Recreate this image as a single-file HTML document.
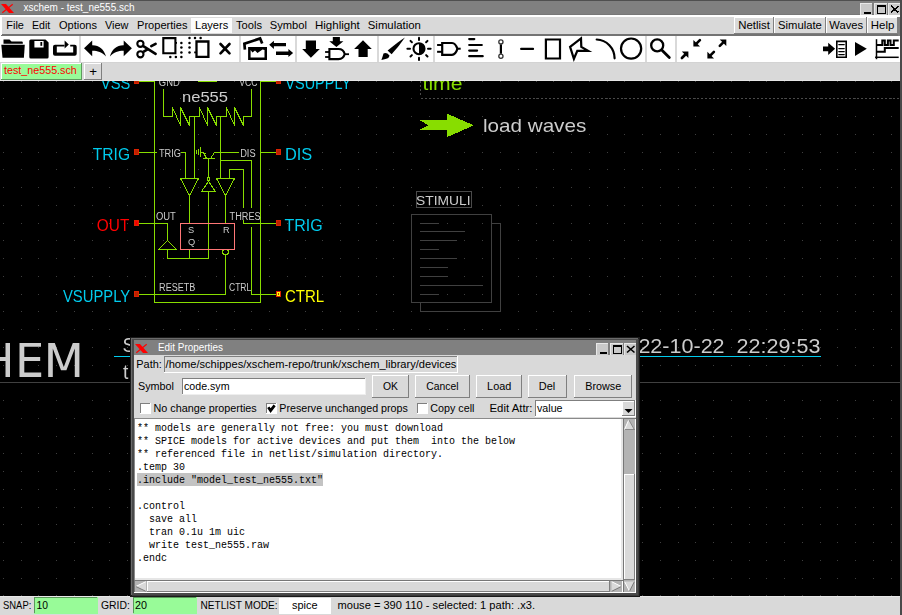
<!DOCTYPE html>
<html><head><meta charset="utf-8"><style>html,body{margin:0;padding:0;background:#d9d9d9;overflow:hidden}svg{display:block}text{white-space:pre}</style></head>
<body><svg width="902" height="615" viewBox="0 0 902 615" shape-rendering="crispEdges" font-family="Liberation Sans">
<rect x="0" y="0" width="902" height="615" fill="#d9d9d9" />
<rect x="0" y="0" width="902" height="1" fill="#4f4f4f" />
<rect x="0" y="1" width="902" height="13" fill="#808080" />
<rect x="0" y="14" width="902" height="1" fill="#777777" />
<path d="M1,4 L6,4 L14,13 L9,13 Z" fill="#ff0000" stroke="none" stroke-width="1" shape-rendering="geometricPrecision"/>
<line x1="2.3" y1="12.7" x2="12.7" y2="4.3" stroke="#ff0000" stroke-width="1.1" shape-rendering="geometricPrecision"/>
<text x="23.5" y="10.5" font-family="Liberation Sans" font-size="11" fill="#ffffff" textLength="111" lengthAdjust="spacingAndGlyphs" >xschem - test_ne555.sch</text>
<rect x="860" y="3" width="12" height="12" fill="#c9c9c9" />
<rect x="860" y="3" width="12" height="1" fill="#e8e8e8" />
<rect x="860" y="3" width="1" height="12" fill="#e8e8e8" />
<rect x="874" y="3" width="13" height="12" fill="#c9c9c9" />
<rect x="874" y="3" width="13" height="1" fill="#e8e8e8" />
<rect x="874" y="3" width="1" height="12" fill="#e8e8e8" />
<rect x="888" y="3" width="12" height="12" fill="#c9c9c9" />
<rect x="888" y="3" width="12" height="1" fill="#e8e8e8" />
<rect x="888" y="3" width="1" height="12" fill="#e8e8e8" />
<rect x="864" y="12" width="7" height="2" fill="#000000" />
<path d="M877.5,6.5 h8 v7 h-8 z" fill="none" stroke="#000" stroke-width="1.4" />
<rect x="877" y="5" width="9" height="2.4" fill="#000" />
<line x1="891" y1="6" x2="898.5" y2="12.5" stroke="#000" stroke-width="1.6" />
<line x1="898.5" y1="6" x2="891" y2="12.5" stroke="#000" stroke-width="1.6" />
<rect x="0" y="15" width="900" height="21" fill="#ffffff" />
<rect x="2" y="34" width="898" height="2" fill="#737373" />
<rect x="1" y="35" width="1" height="1" fill="#737373" />
<rect x="898" y="17" width="2" height="19" fill="#808080" />
<rect x="2" y="17" width="896" height="17" fill="#d9d9d9" />
<rect x="191" y="18" width="41" height="15" fill="#fcfcfc" />
<text x="6.3" y="29" font-family="Liberation Sans" font-size="11" fill="#000000" textLength="17.6" lengthAdjust="spacingAndGlyphs" >File</text>
<text x="32.0" y="29" font-family="Liberation Sans" font-size="11" fill="#000000" textLength="18.2" lengthAdjust="spacingAndGlyphs" >Edit</text>
<text x="59.0" y="29" font-family="Liberation Sans" font-size="11" fill="#000000" textLength="38.0" lengthAdjust="spacingAndGlyphs" >Options</text>
<text x="105.0" y="29" font-family="Liberation Sans" font-size="11" fill="#000000" textLength="23.5" lengthAdjust="spacingAndGlyphs" >View</text>
<text x="137.0" y="29" font-family="Liberation Sans" font-size="11" fill="#000000" textLength="50.5" lengthAdjust="spacingAndGlyphs" >Properties</text>
<text x="195.0" y="29" font-family="Liberation Sans" font-size="11" fill="#000000" textLength="33.2" lengthAdjust="spacingAndGlyphs" >Layers</text>
<text x="236.0" y="29" font-family="Liberation Sans" font-size="11" fill="#000000" textLength="26.0" lengthAdjust="spacingAndGlyphs" >Tools</text>
<text x="269.8" y="29" font-family="Liberation Sans" font-size="11" fill="#000000" textLength="37.2" lengthAdjust="spacingAndGlyphs" >Symbol</text>
<text x="315.0" y="29" font-family="Liberation Sans" font-size="11" fill="#000000" textLength="44.8" lengthAdjust="spacingAndGlyphs" >Highlight</text>
<text x="367.8" y="29" font-family="Liberation Sans" font-size="11" fill="#000000" textLength="53.0" lengthAdjust="spacingAndGlyphs" >Simulation</text>
<rect x="734" y="17" width="40" height="17" fill="#808080" />
<rect x="734" y="17" width="39" height="16" fill="#ffffff" />
<rect x="735" y="18" width="38" height="15" fill="#d9d9d9" />
<text x="738.3" y="29" font-family="Liberation Sans" font-size="11" fill="#000000" textLength="31.6" lengthAdjust="spacingAndGlyphs" >Netlist</text>
<rect x="774" y="17" width="52" height="17" fill="#808080" />
<rect x="774" y="17" width="51" height="16" fill="#ffffff" />
<rect x="775" y="18" width="50" height="15" fill="#d9d9d9" />
<text x="778" y="29" font-family="Liberation Sans" font-size="11" fill="#000000" textLength="43.8" lengthAdjust="spacingAndGlyphs" >Simulate</text>
<rect x="826" y="17" width="41" height="17" fill="#808080" />
<rect x="826" y="17" width="40" height="16" fill="#ffffff" />
<rect x="827" y="18" width="39" height="15" fill="#d9d9d9" />
<text x="829.3" y="29" font-family="Liberation Sans" font-size="11" fill="#000000" textLength="33.8" lengthAdjust="spacingAndGlyphs" >Waves</text>
<rect x="867" y="17" width="31" height="17" fill="#808080" />
<rect x="867" y="17" width="30" height="16" fill="#ffffff" />
<rect x="868" y="18" width="29" height="15" fill="#dedede" />
<text x="870.8" y="29" font-family="Liberation Sans" font-size="11" fill="#000000" textLength="23.5" lengthAdjust="spacingAndGlyphs" >Help</text>
<rect x="900" y="0" width="2" height="615" fill="#4a4a4a" />
<rect x="0" y="36" width="900" height="26" fill="#ffffff" />
<rect x="0" y="62" width="900" height="1" fill="#d3d3d3" />
<rect x="79" y="36" width="2" height="26" fill="#d9d9d9" />
<rect x="239" y="36" width="2" height="26" fill="#d9d9d9" />
<rect x="295" y="36" width="2" height="26" fill="#d9d9d9" />
<rect x="377" y="36" width="2" height="26" fill="#d9d9d9" />
<rect x="433" y="36" width="2" height="26" fill="#d9d9d9" />
<rect x="645" y="36" width="2" height="26" fill="#d9d9d9" />
<rect x="675" y="36" width="2" height="26" fill="#d9d9d9" />
<rect x="0" y="63" width="900" height="17" fill="#d9d9d9" />
<rect x="0" y="80" width="900" height="1" fill="#e6e6e6" />
<rect x="1" y="63" width="81" height="17" fill="#5e9a5e" />
<rect x="1" y="63" width="80" height="16" fill="#ffffff" />
<rect x="2" y="64" width="79" height="15" fill="#98fb98" />
<text x="4" y="74" font-family="Liberation Sans" font-size="11" fill="#ff0000" textLength="72.8" lengthAdjust="spacingAndGlyphs" >test_ne555.sch</text>
<rect x="84" y="63" width="18" height="17" fill="#7f7f7f" />
<rect x="84" y="63" width="17" height="16" fill="#ffffff" />
<rect x="85" y="64" width="16" height="15" fill="#d9d9d9" />
<text x="89.2" y="75.5" font-family="Liberation Sans" font-size="12.5" fill="#000000" textLength="7.8" lengthAdjust="spacingAndGlyphs" >+</text>
<rect x="0" y="81" width="900" height="515" fill="#000000" />
<rect x="0" y="596" width="900" height="19" fill="#d9d9d9" />
<rect x="0" y="596" width="900" height="1" fill="#e8e8e8" />
<text x="3" y="609" font-family="Liberation Sans" font-size="11" fill="#000" textLength="28.3" lengthAdjust="spacingAndGlyphs" >SNAP:</text>
<rect x="34" y="597" width="64" height="17" fill="#98fb98" />
<rect x="34" y="597" width="63" height="16" fill="#5a9a5a" />
<rect x="35" y="598" width="62" height="15" fill="#98fb98" />
<text x="36.5" y="609" font-family="Liberation Sans" font-size="11" fill="#000" textLength="11.5" lengthAdjust="spacingAndGlyphs" >10</text>
<text x="101" y="609" font-family="Liberation Sans" font-size="11" fill="#000" textLength="28.8" lengthAdjust="spacingAndGlyphs" >GRID:</text>
<rect x="133" y="597" width="64" height="17" fill="#98fb98" />
<rect x="133" y="597" width="63" height="16" fill="#5a9a5a" />
<rect x="134" y="598" width="62" height="15" fill="#98fb98" />
<text x="135" y="609" font-family="Liberation Sans" font-size="11" fill="#000" textLength="12" lengthAdjust="spacingAndGlyphs" >20</text>
<text x="200.5" y="609" font-family="Liberation Sans" font-size="11" fill="#000" textLength="77" lengthAdjust="spacingAndGlyphs" >NETLIST MODE:</text>
<rect x="279" y="598" width="52" height="16" fill="#ffffff" />
<text x="292" y="609" font-family="Liberation Sans" font-size="11" fill="#000" textLength="25.5" lengthAdjust="spacingAndGlyphs" >spice</text>
<text x="337.5" y="609" font-family="Liberation Sans" font-size="11" fill="#000" textLength="197.5" lengthAdjust="spacingAndGlyphs" >mouse = 390 110 - selected: 1 path: .x3.</text>
<defs><filter id="gray" filterUnits="userSpaceOnUse" x="0" y="0" width="902" height="615"><feColorMatrix type="identity"/></filter></defs>
<svg x="0" y="81" width="900" height="515" viewBox="0 81 900 515" overflow="hidden"><g filter="url(#gray)">
<path d="M3,81h1v1h-1zM3,98h1v1h-1zM3,116h1v1h-1zM3,134h1v1h-1zM3,152h1v1h-1zM3,169h1v1h-1zM3,187h1v1h-1zM3,205h1v1h-1zM3,223h1v1h-1zM3,240h1v1h-1zM3,258h1v1h-1zM3,276h1v1h-1zM3,294h1v1h-1zM3,311h1v1h-1zM3,329h1v1h-1zM3,347h1v1h-1zM3,365h1v1h-1zM3,382h1v1h-1zM3,400h1v1h-1zM3,418h1v1h-1zM3,436h1v1h-1zM3,453h1v1h-1zM3,471h1v1h-1zM3,489h1v1h-1zM3,507h1v1h-1zM3,524h1v1h-1zM3,542h1v1h-1zM3,560h1v1h-1zM3,578h1v1h-1zM3,595h1v1h-1zM21,81h1v1h-1zM21,98h1v1h-1zM21,116h1v1h-1zM21,134h1v1h-1zM21,152h1v1h-1zM21,169h1v1h-1zM21,187h1v1h-1zM21,205h1v1h-1zM21,223h1v1h-1zM21,240h1v1h-1zM21,258h1v1h-1zM21,276h1v1h-1zM21,294h1v1h-1zM21,311h1v1h-1zM21,329h1v1h-1zM21,347h1v1h-1zM21,365h1v1h-1zM21,382h1v1h-1zM21,400h1v1h-1zM21,418h1v1h-1zM21,436h1v1h-1zM21,453h1v1h-1zM21,471h1v1h-1zM21,489h1v1h-1zM21,507h1v1h-1zM21,524h1v1h-1zM21,542h1v1h-1zM21,560h1v1h-1zM21,578h1v1h-1zM21,595h1v1h-1zM38,81h1v1h-1zM38,98h1v1h-1zM38,116h1v1h-1zM38,134h1v1h-1zM38,152h1v1h-1zM38,169h1v1h-1zM38,187h1v1h-1zM38,205h1v1h-1zM38,223h1v1h-1zM38,240h1v1h-1zM38,258h1v1h-1zM38,276h1v1h-1zM38,294h1v1h-1zM38,311h1v1h-1zM38,329h1v1h-1zM38,347h1v1h-1zM38,365h1v1h-1zM38,382h1v1h-1zM38,400h1v1h-1zM38,418h1v1h-1zM38,436h1v1h-1zM38,453h1v1h-1zM38,471h1v1h-1zM38,489h1v1h-1zM38,507h1v1h-1zM38,524h1v1h-1zM38,542h1v1h-1zM38,560h1v1h-1zM38,578h1v1h-1zM38,595h1v1h-1zM56,81h1v1h-1zM56,98h1v1h-1zM56,116h1v1h-1zM56,134h1v1h-1zM56,152h1v1h-1zM56,169h1v1h-1zM56,187h1v1h-1zM56,205h1v1h-1zM56,223h1v1h-1zM56,240h1v1h-1zM56,258h1v1h-1zM56,276h1v1h-1zM56,294h1v1h-1zM56,311h1v1h-1zM56,329h1v1h-1zM56,347h1v1h-1zM56,365h1v1h-1zM56,382h1v1h-1zM56,400h1v1h-1zM56,418h1v1h-1zM56,436h1v1h-1zM56,453h1v1h-1zM56,471h1v1h-1zM56,489h1v1h-1zM56,507h1v1h-1zM56,524h1v1h-1zM56,542h1v1h-1zM56,560h1v1h-1zM56,578h1v1h-1zM56,595h1v1h-1zM74,81h1v1h-1zM74,98h1v1h-1zM74,116h1v1h-1zM74,134h1v1h-1zM74,152h1v1h-1zM74,169h1v1h-1zM74,187h1v1h-1zM74,205h1v1h-1zM74,223h1v1h-1zM74,240h1v1h-1zM74,258h1v1h-1zM74,276h1v1h-1zM74,294h1v1h-1zM74,311h1v1h-1zM74,329h1v1h-1zM74,347h1v1h-1zM74,365h1v1h-1zM74,382h1v1h-1zM74,400h1v1h-1zM74,418h1v1h-1zM74,436h1v1h-1zM74,453h1v1h-1zM74,471h1v1h-1zM74,489h1v1h-1zM74,507h1v1h-1zM74,524h1v1h-1zM74,542h1v1h-1zM74,560h1v1h-1zM74,578h1v1h-1zM74,595h1v1h-1zM92,81h1v1h-1zM92,98h1v1h-1zM92,116h1v1h-1zM92,134h1v1h-1zM92,152h1v1h-1zM92,169h1v1h-1zM92,187h1v1h-1zM92,205h1v1h-1zM92,223h1v1h-1zM92,240h1v1h-1zM92,258h1v1h-1zM92,276h1v1h-1zM92,294h1v1h-1zM92,311h1v1h-1zM92,329h1v1h-1zM92,347h1v1h-1zM92,365h1v1h-1zM92,382h1v1h-1zM92,400h1v1h-1zM92,418h1v1h-1zM92,436h1v1h-1zM92,453h1v1h-1zM92,471h1v1h-1zM92,489h1v1h-1zM92,507h1v1h-1zM92,524h1v1h-1zM92,542h1v1h-1zM92,560h1v1h-1zM92,578h1v1h-1zM92,595h1v1h-1zM109,81h1v1h-1zM109,98h1v1h-1zM109,116h1v1h-1zM109,134h1v1h-1zM109,152h1v1h-1zM109,169h1v1h-1zM109,187h1v1h-1zM109,205h1v1h-1zM109,223h1v1h-1zM109,240h1v1h-1zM109,258h1v1h-1zM109,276h1v1h-1zM109,294h1v1h-1zM109,311h1v1h-1zM109,329h1v1h-1zM109,347h1v1h-1zM109,365h1v1h-1zM109,382h1v1h-1zM109,400h1v1h-1zM109,418h1v1h-1zM109,436h1v1h-1zM109,453h1v1h-1zM109,471h1v1h-1zM109,489h1v1h-1zM109,507h1v1h-1zM109,524h1v1h-1zM109,542h1v1h-1zM109,560h1v1h-1zM109,578h1v1h-1zM109,595h1v1h-1zM127,81h1v1h-1zM127,98h1v1h-1zM127,116h1v1h-1zM127,134h1v1h-1zM127,152h1v1h-1zM127,169h1v1h-1zM127,187h1v1h-1zM127,205h1v1h-1zM127,223h1v1h-1zM127,240h1v1h-1zM127,258h1v1h-1zM127,276h1v1h-1zM127,294h1v1h-1zM127,311h1v1h-1zM127,329h1v1h-1zM127,347h1v1h-1zM127,365h1v1h-1zM127,382h1v1h-1zM127,400h1v1h-1zM127,418h1v1h-1zM127,436h1v1h-1zM127,453h1v1h-1zM127,471h1v1h-1zM127,489h1v1h-1zM127,507h1v1h-1zM127,524h1v1h-1zM127,542h1v1h-1zM127,560h1v1h-1zM127,578h1v1h-1zM127,595h1v1h-1zM145,81h1v1h-1zM145,98h1v1h-1zM145,116h1v1h-1zM145,134h1v1h-1zM145,152h1v1h-1zM145,169h1v1h-1zM145,187h1v1h-1zM145,205h1v1h-1zM145,223h1v1h-1zM145,240h1v1h-1zM145,258h1v1h-1zM145,276h1v1h-1zM145,294h1v1h-1zM145,311h1v1h-1zM145,329h1v1h-1zM145,347h1v1h-1zM145,365h1v1h-1zM145,382h1v1h-1zM145,400h1v1h-1zM145,418h1v1h-1zM145,436h1v1h-1zM145,453h1v1h-1zM145,471h1v1h-1zM145,489h1v1h-1zM145,507h1v1h-1zM145,524h1v1h-1zM145,542h1v1h-1zM145,560h1v1h-1zM145,578h1v1h-1zM145,595h1v1h-1zM163,81h1v1h-1zM163,98h1v1h-1zM163,116h1v1h-1zM163,134h1v1h-1zM163,152h1v1h-1zM163,169h1v1h-1zM163,187h1v1h-1zM163,205h1v1h-1zM163,223h1v1h-1zM163,240h1v1h-1zM163,258h1v1h-1zM163,276h1v1h-1zM163,294h1v1h-1zM163,311h1v1h-1zM163,329h1v1h-1zM163,347h1v1h-1zM163,365h1v1h-1zM163,382h1v1h-1zM163,400h1v1h-1zM163,418h1v1h-1zM163,436h1v1h-1zM163,453h1v1h-1zM163,471h1v1h-1zM163,489h1v1h-1zM163,507h1v1h-1zM163,524h1v1h-1zM163,542h1v1h-1zM163,560h1v1h-1zM163,578h1v1h-1zM163,595h1v1h-1zM180,81h1v1h-1zM180,98h1v1h-1zM180,116h1v1h-1zM180,134h1v1h-1zM180,152h1v1h-1zM180,169h1v1h-1zM180,187h1v1h-1zM180,205h1v1h-1zM180,223h1v1h-1zM180,240h1v1h-1zM180,258h1v1h-1zM180,276h1v1h-1zM180,294h1v1h-1zM180,311h1v1h-1zM180,329h1v1h-1zM180,347h1v1h-1zM180,365h1v1h-1zM180,382h1v1h-1zM180,400h1v1h-1zM180,418h1v1h-1zM180,436h1v1h-1zM180,453h1v1h-1zM180,471h1v1h-1zM180,489h1v1h-1zM180,507h1v1h-1zM180,524h1v1h-1zM180,542h1v1h-1zM180,560h1v1h-1zM180,578h1v1h-1zM180,595h1v1h-1zM198,81h1v1h-1zM198,98h1v1h-1zM198,116h1v1h-1zM198,134h1v1h-1zM198,152h1v1h-1zM198,169h1v1h-1zM198,187h1v1h-1zM198,205h1v1h-1zM198,223h1v1h-1zM198,240h1v1h-1zM198,258h1v1h-1zM198,276h1v1h-1zM198,294h1v1h-1zM198,311h1v1h-1zM198,329h1v1h-1zM198,347h1v1h-1zM198,365h1v1h-1zM198,382h1v1h-1zM198,400h1v1h-1zM198,418h1v1h-1zM198,436h1v1h-1zM198,453h1v1h-1zM198,471h1v1h-1zM198,489h1v1h-1zM198,507h1v1h-1zM198,524h1v1h-1zM198,542h1v1h-1zM198,560h1v1h-1zM198,578h1v1h-1zM198,595h1v1h-1zM216,81h1v1h-1zM216,98h1v1h-1zM216,116h1v1h-1zM216,134h1v1h-1zM216,152h1v1h-1zM216,169h1v1h-1zM216,187h1v1h-1zM216,205h1v1h-1zM216,223h1v1h-1zM216,240h1v1h-1zM216,258h1v1h-1zM216,276h1v1h-1zM216,294h1v1h-1zM216,311h1v1h-1zM216,329h1v1h-1zM216,347h1v1h-1zM216,365h1v1h-1zM216,382h1v1h-1zM216,400h1v1h-1zM216,418h1v1h-1zM216,436h1v1h-1zM216,453h1v1h-1zM216,471h1v1h-1zM216,489h1v1h-1zM216,507h1v1h-1zM216,524h1v1h-1zM216,542h1v1h-1zM216,560h1v1h-1zM216,578h1v1h-1zM216,595h1v1h-1zM234,81h1v1h-1zM234,98h1v1h-1zM234,116h1v1h-1zM234,134h1v1h-1zM234,152h1v1h-1zM234,169h1v1h-1zM234,187h1v1h-1zM234,205h1v1h-1zM234,223h1v1h-1zM234,240h1v1h-1zM234,258h1v1h-1zM234,276h1v1h-1zM234,294h1v1h-1zM234,311h1v1h-1zM234,329h1v1h-1zM234,347h1v1h-1zM234,365h1v1h-1zM234,382h1v1h-1zM234,400h1v1h-1zM234,418h1v1h-1zM234,436h1v1h-1zM234,453h1v1h-1zM234,471h1v1h-1zM234,489h1v1h-1zM234,507h1v1h-1zM234,524h1v1h-1zM234,542h1v1h-1zM234,560h1v1h-1zM234,578h1v1h-1zM234,595h1v1h-1zM251,81h1v1h-1zM251,98h1v1h-1zM251,116h1v1h-1zM251,134h1v1h-1zM251,152h1v1h-1zM251,169h1v1h-1zM251,187h1v1h-1zM251,205h1v1h-1zM251,223h1v1h-1zM251,240h1v1h-1zM251,258h1v1h-1zM251,276h1v1h-1zM251,294h1v1h-1zM251,311h1v1h-1zM251,329h1v1h-1zM251,347h1v1h-1zM251,365h1v1h-1zM251,382h1v1h-1zM251,400h1v1h-1zM251,418h1v1h-1zM251,436h1v1h-1zM251,453h1v1h-1zM251,471h1v1h-1zM251,489h1v1h-1zM251,507h1v1h-1zM251,524h1v1h-1zM251,542h1v1h-1zM251,560h1v1h-1zM251,578h1v1h-1zM251,595h1v1h-1zM269,81h1v1h-1zM269,98h1v1h-1zM269,116h1v1h-1zM269,134h1v1h-1zM269,152h1v1h-1zM269,169h1v1h-1zM269,187h1v1h-1zM269,205h1v1h-1zM269,223h1v1h-1zM269,240h1v1h-1zM269,258h1v1h-1zM269,276h1v1h-1zM269,294h1v1h-1zM269,311h1v1h-1zM269,329h1v1h-1zM269,347h1v1h-1zM269,365h1v1h-1zM269,382h1v1h-1zM269,400h1v1h-1zM269,418h1v1h-1zM269,436h1v1h-1zM269,453h1v1h-1zM269,471h1v1h-1zM269,489h1v1h-1zM269,507h1v1h-1zM269,524h1v1h-1zM269,542h1v1h-1zM269,560h1v1h-1zM269,578h1v1h-1zM269,595h1v1h-1zM287,81h1v1h-1zM287,98h1v1h-1zM287,116h1v1h-1zM287,134h1v1h-1zM287,152h1v1h-1zM287,169h1v1h-1zM287,187h1v1h-1zM287,205h1v1h-1zM287,223h1v1h-1zM287,240h1v1h-1zM287,258h1v1h-1zM287,276h1v1h-1zM287,294h1v1h-1zM287,311h1v1h-1zM287,329h1v1h-1zM287,347h1v1h-1zM287,365h1v1h-1zM287,382h1v1h-1zM287,400h1v1h-1zM287,418h1v1h-1zM287,436h1v1h-1zM287,453h1v1h-1zM287,471h1v1h-1zM287,489h1v1h-1zM287,507h1v1h-1zM287,524h1v1h-1zM287,542h1v1h-1zM287,560h1v1h-1zM287,578h1v1h-1zM287,595h1v1h-1zM305,81h1v1h-1zM305,98h1v1h-1zM305,116h1v1h-1zM305,134h1v1h-1zM305,152h1v1h-1zM305,169h1v1h-1zM305,187h1v1h-1zM305,205h1v1h-1zM305,223h1v1h-1zM305,240h1v1h-1zM305,258h1v1h-1zM305,276h1v1h-1zM305,294h1v1h-1zM305,311h1v1h-1zM305,329h1v1h-1zM305,347h1v1h-1zM305,365h1v1h-1zM305,382h1v1h-1zM305,400h1v1h-1zM305,418h1v1h-1zM305,436h1v1h-1zM305,453h1v1h-1zM305,471h1v1h-1zM305,489h1v1h-1zM305,507h1v1h-1zM305,524h1v1h-1zM305,542h1v1h-1zM305,560h1v1h-1zM305,578h1v1h-1zM305,595h1v1h-1zM322,81h1v1h-1zM322,98h1v1h-1zM322,116h1v1h-1zM322,134h1v1h-1zM322,152h1v1h-1zM322,169h1v1h-1zM322,187h1v1h-1zM322,205h1v1h-1zM322,223h1v1h-1zM322,240h1v1h-1zM322,258h1v1h-1zM322,276h1v1h-1zM322,294h1v1h-1zM322,311h1v1h-1zM322,329h1v1h-1zM322,347h1v1h-1zM322,365h1v1h-1zM322,382h1v1h-1zM322,400h1v1h-1zM322,418h1v1h-1zM322,436h1v1h-1zM322,453h1v1h-1zM322,471h1v1h-1zM322,489h1v1h-1zM322,507h1v1h-1zM322,524h1v1h-1zM322,542h1v1h-1zM322,560h1v1h-1zM322,578h1v1h-1zM322,595h1v1h-1zM340,81h1v1h-1zM340,98h1v1h-1zM340,116h1v1h-1zM340,134h1v1h-1zM340,152h1v1h-1zM340,169h1v1h-1zM340,187h1v1h-1zM340,205h1v1h-1zM340,223h1v1h-1zM340,240h1v1h-1zM340,258h1v1h-1zM340,276h1v1h-1zM340,294h1v1h-1zM340,311h1v1h-1zM340,329h1v1h-1zM340,347h1v1h-1zM340,365h1v1h-1zM340,382h1v1h-1zM340,400h1v1h-1zM340,418h1v1h-1zM340,436h1v1h-1zM340,453h1v1h-1zM340,471h1v1h-1zM340,489h1v1h-1zM340,507h1v1h-1zM340,524h1v1h-1zM340,542h1v1h-1zM340,560h1v1h-1zM340,578h1v1h-1zM340,595h1v1h-1zM358,81h1v1h-1zM358,98h1v1h-1zM358,116h1v1h-1zM358,134h1v1h-1zM358,152h1v1h-1zM358,169h1v1h-1zM358,187h1v1h-1zM358,205h1v1h-1zM358,223h1v1h-1zM358,240h1v1h-1zM358,258h1v1h-1zM358,276h1v1h-1zM358,294h1v1h-1zM358,311h1v1h-1zM358,329h1v1h-1zM358,347h1v1h-1zM358,365h1v1h-1zM358,382h1v1h-1zM358,400h1v1h-1zM358,418h1v1h-1zM358,436h1v1h-1zM358,453h1v1h-1zM358,471h1v1h-1zM358,489h1v1h-1zM358,507h1v1h-1zM358,524h1v1h-1zM358,542h1v1h-1zM358,560h1v1h-1zM358,578h1v1h-1zM358,595h1v1h-1zM376,81h1v1h-1zM376,98h1v1h-1zM376,116h1v1h-1zM376,134h1v1h-1zM376,152h1v1h-1zM376,169h1v1h-1zM376,187h1v1h-1zM376,205h1v1h-1zM376,223h1v1h-1zM376,240h1v1h-1zM376,258h1v1h-1zM376,276h1v1h-1zM376,294h1v1h-1zM376,311h1v1h-1zM376,329h1v1h-1zM376,347h1v1h-1zM376,365h1v1h-1zM376,382h1v1h-1zM376,400h1v1h-1zM376,418h1v1h-1zM376,436h1v1h-1zM376,453h1v1h-1zM376,471h1v1h-1zM376,489h1v1h-1zM376,507h1v1h-1zM376,524h1v1h-1zM376,542h1v1h-1zM376,560h1v1h-1zM376,578h1v1h-1zM376,595h1v1h-1zM393,81h1v1h-1zM393,98h1v1h-1zM393,116h1v1h-1zM393,134h1v1h-1zM393,152h1v1h-1zM393,169h1v1h-1zM393,187h1v1h-1zM393,205h1v1h-1zM393,223h1v1h-1zM393,240h1v1h-1zM393,258h1v1h-1zM393,276h1v1h-1zM393,294h1v1h-1zM393,311h1v1h-1zM393,329h1v1h-1zM393,347h1v1h-1zM393,365h1v1h-1zM393,382h1v1h-1zM393,400h1v1h-1zM393,418h1v1h-1zM393,436h1v1h-1zM393,453h1v1h-1zM393,471h1v1h-1zM393,489h1v1h-1zM393,507h1v1h-1zM393,524h1v1h-1zM393,542h1v1h-1zM393,560h1v1h-1zM393,578h1v1h-1zM393,595h1v1h-1zM411,81h1v1h-1zM411,98h1v1h-1zM411,116h1v1h-1zM411,134h1v1h-1zM411,152h1v1h-1zM411,169h1v1h-1zM411,187h1v1h-1zM411,205h1v1h-1zM411,223h1v1h-1zM411,240h1v1h-1zM411,258h1v1h-1zM411,276h1v1h-1zM411,294h1v1h-1zM411,311h1v1h-1zM411,329h1v1h-1zM411,347h1v1h-1zM411,365h1v1h-1zM411,382h1v1h-1zM411,400h1v1h-1zM411,418h1v1h-1zM411,436h1v1h-1zM411,453h1v1h-1zM411,471h1v1h-1zM411,489h1v1h-1zM411,507h1v1h-1zM411,524h1v1h-1zM411,542h1v1h-1zM411,560h1v1h-1zM411,578h1v1h-1zM411,595h1v1h-1zM429,81h1v1h-1zM429,98h1v1h-1zM429,116h1v1h-1zM429,134h1v1h-1zM429,152h1v1h-1zM429,169h1v1h-1zM429,187h1v1h-1zM429,205h1v1h-1zM429,223h1v1h-1zM429,240h1v1h-1zM429,258h1v1h-1zM429,276h1v1h-1zM429,294h1v1h-1zM429,311h1v1h-1zM429,329h1v1h-1zM429,347h1v1h-1zM429,365h1v1h-1zM429,382h1v1h-1zM429,400h1v1h-1zM429,418h1v1h-1zM429,436h1v1h-1zM429,453h1v1h-1zM429,471h1v1h-1zM429,489h1v1h-1zM429,507h1v1h-1zM429,524h1v1h-1zM429,542h1v1h-1zM429,560h1v1h-1zM429,578h1v1h-1zM429,595h1v1h-1zM447,81h1v1h-1zM447,98h1v1h-1zM447,116h1v1h-1zM447,134h1v1h-1zM447,152h1v1h-1zM447,169h1v1h-1zM447,187h1v1h-1zM447,205h1v1h-1zM447,223h1v1h-1zM447,240h1v1h-1zM447,258h1v1h-1zM447,276h1v1h-1zM447,294h1v1h-1zM447,311h1v1h-1zM447,329h1v1h-1zM447,347h1v1h-1zM447,365h1v1h-1zM447,382h1v1h-1zM447,400h1v1h-1zM447,418h1v1h-1zM447,436h1v1h-1zM447,453h1v1h-1zM447,471h1v1h-1zM447,489h1v1h-1zM447,507h1v1h-1zM447,524h1v1h-1zM447,542h1v1h-1zM447,560h1v1h-1zM447,578h1v1h-1zM447,595h1v1h-1zM464,81h1v1h-1zM464,98h1v1h-1zM464,116h1v1h-1zM464,134h1v1h-1zM464,152h1v1h-1zM464,169h1v1h-1zM464,187h1v1h-1zM464,205h1v1h-1zM464,223h1v1h-1zM464,240h1v1h-1zM464,258h1v1h-1zM464,276h1v1h-1zM464,294h1v1h-1zM464,311h1v1h-1zM464,329h1v1h-1zM464,347h1v1h-1zM464,365h1v1h-1zM464,382h1v1h-1zM464,400h1v1h-1zM464,418h1v1h-1zM464,436h1v1h-1zM464,453h1v1h-1zM464,471h1v1h-1zM464,489h1v1h-1zM464,507h1v1h-1zM464,524h1v1h-1zM464,542h1v1h-1zM464,560h1v1h-1zM464,578h1v1h-1zM464,595h1v1h-1zM482,81h1v1h-1zM482,98h1v1h-1zM482,116h1v1h-1zM482,134h1v1h-1zM482,152h1v1h-1zM482,169h1v1h-1zM482,187h1v1h-1zM482,205h1v1h-1zM482,223h1v1h-1zM482,240h1v1h-1zM482,258h1v1h-1zM482,276h1v1h-1zM482,294h1v1h-1zM482,311h1v1h-1zM482,329h1v1h-1zM482,347h1v1h-1zM482,365h1v1h-1zM482,382h1v1h-1zM482,400h1v1h-1zM482,418h1v1h-1zM482,436h1v1h-1zM482,453h1v1h-1zM482,471h1v1h-1zM482,489h1v1h-1zM482,507h1v1h-1zM482,524h1v1h-1zM482,542h1v1h-1zM482,560h1v1h-1zM482,578h1v1h-1zM482,595h1v1h-1zM500,81h1v1h-1zM500,98h1v1h-1zM500,116h1v1h-1zM500,134h1v1h-1zM500,152h1v1h-1zM500,169h1v1h-1zM500,187h1v1h-1zM500,205h1v1h-1zM500,223h1v1h-1zM500,240h1v1h-1zM500,258h1v1h-1zM500,276h1v1h-1zM500,294h1v1h-1zM500,311h1v1h-1zM500,329h1v1h-1zM500,347h1v1h-1zM500,365h1v1h-1zM500,382h1v1h-1zM500,400h1v1h-1zM500,418h1v1h-1zM500,436h1v1h-1zM500,453h1v1h-1zM500,471h1v1h-1zM500,489h1v1h-1zM500,507h1v1h-1zM500,524h1v1h-1zM500,542h1v1h-1zM500,560h1v1h-1zM500,578h1v1h-1zM500,595h1v1h-1zM518,81h1v1h-1zM518,98h1v1h-1zM518,116h1v1h-1zM518,134h1v1h-1zM518,152h1v1h-1zM518,169h1v1h-1zM518,187h1v1h-1zM518,205h1v1h-1zM518,223h1v1h-1zM518,240h1v1h-1zM518,258h1v1h-1zM518,276h1v1h-1zM518,294h1v1h-1zM518,311h1v1h-1zM518,329h1v1h-1zM518,347h1v1h-1zM518,365h1v1h-1zM518,382h1v1h-1zM518,400h1v1h-1zM518,418h1v1h-1zM518,436h1v1h-1zM518,453h1v1h-1zM518,471h1v1h-1zM518,489h1v1h-1zM518,507h1v1h-1zM518,524h1v1h-1zM518,542h1v1h-1zM518,560h1v1h-1zM518,578h1v1h-1zM518,595h1v1h-1zM536,81h1v1h-1zM536,98h1v1h-1zM536,116h1v1h-1zM536,134h1v1h-1zM536,152h1v1h-1zM536,169h1v1h-1zM536,187h1v1h-1zM536,205h1v1h-1zM536,223h1v1h-1zM536,240h1v1h-1zM536,258h1v1h-1zM536,276h1v1h-1zM536,294h1v1h-1zM536,311h1v1h-1zM536,329h1v1h-1zM536,347h1v1h-1zM536,365h1v1h-1zM536,382h1v1h-1zM536,400h1v1h-1zM536,418h1v1h-1zM536,436h1v1h-1zM536,453h1v1h-1zM536,471h1v1h-1zM536,489h1v1h-1zM536,507h1v1h-1zM536,524h1v1h-1zM536,542h1v1h-1zM536,560h1v1h-1zM536,578h1v1h-1zM536,595h1v1h-1zM553,81h1v1h-1zM553,98h1v1h-1zM553,116h1v1h-1zM553,134h1v1h-1zM553,152h1v1h-1zM553,169h1v1h-1zM553,187h1v1h-1zM553,205h1v1h-1zM553,223h1v1h-1zM553,240h1v1h-1zM553,258h1v1h-1zM553,276h1v1h-1zM553,294h1v1h-1zM553,311h1v1h-1zM553,329h1v1h-1zM553,347h1v1h-1zM553,365h1v1h-1zM553,382h1v1h-1zM553,400h1v1h-1zM553,418h1v1h-1zM553,436h1v1h-1zM553,453h1v1h-1zM553,471h1v1h-1zM553,489h1v1h-1zM553,507h1v1h-1zM553,524h1v1h-1zM553,542h1v1h-1zM553,560h1v1h-1zM553,578h1v1h-1zM553,595h1v1h-1zM571,81h1v1h-1zM571,98h1v1h-1zM571,116h1v1h-1zM571,134h1v1h-1zM571,152h1v1h-1zM571,169h1v1h-1zM571,187h1v1h-1zM571,205h1v1h-1zM571,223h1v1h-1zM571,240h1v1h-1zM571,258h1v1h-1zM571,276h1v1h-1zM571,294h1v1h-1zM571,311h1v1h-1zM571,329h1v1h-1zM571,347h1v1h-1zM571,365h1v1h-1zM571,382h1v1h-1zM571,400h1v1h-1zM571,418h1v1h-1zM571,436h1v1h-1zM571,453h1v1h-1zM571,471h1v1h-1zM571,489h1v1h-1zM571,507h1v1h-1zM571,524h1v1h-1zM571,542h1v1h-1zM571,560h1v1h-1zM571,578h1v1h-1zM571,595h1v1h-1zM589,81h1v1h-1zM589,98h1v1h-1zM589,116h1v1h-1zM589,134h1v1h-1zM589,152h1v1h-1zM589,169h1v1h-1zM589,187h1v1h-1zM589,205h1v1h-1zM589,223h1v1h-1zM589,240h1v1h-1zM589,258h1v1h-1zM589,276h1v1h-1zM589,294h1v1h-1zM589,311h1v1h-1zM589,329h1v1h-1zM589,347h1v1h-1zM589,365h1v1h-1zM589,382h1v1h-1zM589,400h1v1h-1zM589,418h1v1h-1zM589,436h1v1h-1zM589,453h1v1h-1zM589,471h1v1h-1zM589,489h1v1h-1zM589,507h1v1h-1zM589,524h1v1h-1zM589,542h1v1h-1zM589,560h1v1h-1zM589,578h1v1h-1zM589,595h1v1h-1zM607,81h1v1h-1zM607,98h1v1h-1zM607,116h1v1h-1zM607,134h1v1h-1zM607,152h1v1h-1zM607,169h1v1h-1zM607,187h1v1h-1zM607,205h1v1h-1zM607,223h1v1h-1zM607,240h1v1h-1zM607,258h1v1h-1zM607,276h1v1h-1zM607,294h1v1h-1zM607,311h1v1h-1zM607,329h1v1h-1zM607,347h1v1h-1zM607,365h1v1h-1zM607,382h1v1h-1zM607,400h1v1h-1zM607,418h1v1h-1zM607,436h1v1h-1zM607,453h1v1h-1zM607,471h1v1h-1zM607,489h1v1h-1zM607,507h1v1h-1zM607,524h1v1h-1zM607,542h1v1h-1zM607,560h1v1h-1zM607,578h1v1h-1zM607,595h1v1h-1zM624,81h1v1h-1zM624,98h1v1h-1zM624,116h1v1h-1zM624,134h1v1h-1zM624,152h1v1h-1zM624,169h1v1h-1zM624,187h1v1h-1zM624,205h1v1h-1zM624,223h1v1h-1zM624,240h1v1h-1zM624,258h1v1h-1zM624,276h1v1h-1zM624,294h1v1h-1zM624,311h1v1h-1zM624,329h1v1h-1zM624,347h1v1h-1zM624,365h1v1h-1zM624,382h1v1h-1zM624,400h1v1h-1zM624,418h1v1h-1zM624,436h1v1h-1zM624,453h1v1h-1zM624,471h1v1h-1zM624,489h1v1h-1zM624,507h1v1h-1zM624,524h1v1h-1zM624,542h1v1h-1zM624,560h1v1h-1zM624,578h1v1h-1zM624,595h1v1h-1zM642,81h1v1h-1zM642,98h1v1h-1zM642,116h1v1h-1zM642,134h1v1h-1zM642,152h1v1h-1zM642,169h1v1h-1zM642,187h1v1h-1zM642,205h1v1h-1zM642,223h1v1h-1zM642,240h1v1h-1zM642,258h1v1h-1zM642,276h1v1h-1zM642,294h1v1h-1zM642,311h1v1h-1zM642,329h1v1h-1zM642,347h1v1h-1zM642,365h1v1h-1zM642,382h1v1h-1zM642,400h1v1h-1zM642,418h1v1h-1zM642,436h1v1h-1zM642,453h1v1h-1zM642,471h1v1h-1zM642,489h1v1h-1zM642,507h1v1h-1zM642,524h1v1h-1zM642,542h1v1h-1zM642,560h1v1h-1zM642,578h1v1h-1zM642,595h1v1h-1zM660,81h1v1h-1zM660,98h1v1h-1zM660,116h1v1h-1zM660,134h1v1h-1zM660,152h1v1h-1zM660,169h1v1h-1zM660,187h1v1h-1zM660,205h1v1h-1zM660,223h1v1h-1zM660,240h1v1h-1zM660,258h1v1h-1zM660,276h1v1h-1zM660,294h1v1h-1zM660,311h1v1h-1zM660,329h1v1h-1zM660,347h1v1h-1zM660,365h1v1h-1zM660,382h1v1h-1zM660,400h1v1h-1zM660,418h1v1h-1zM660,436h1v1h-1zM660,453h1v1h-1zM660,471h1v1h-1zM660,489h1v1h-1zM660,507h1v1h-1zM660,524h1v1h-1zM660,542h1v1h-1zM660,560h1v1h-1zM660,578h1v1h-1zM660,595h1v1h-1zM678,81h1v1h-1zM678,98h1v1h-1zM678,116h1v1h-1zM678,134h1v1h-1zM678,152h1v1h-1zM678,169h1v1h-1zM678,187h1v1h-1zM678,205h1v1h-1zM678,223h1v1h-1zM678,240h1v1h-1zM678,258h1v1h-1zM678,276h1v1h-1zM678,294h1v1h-1zM678,311h1v1h-1zM678,329h1v1h-1zM678,347h1v1h-1zM678,365h1v1h-1zM678,382h1v1h-1zM678,400h1v1h-1zM678,418h1v1h-1zM678,436h1v1h-1zM678,453h1v1h-1zM678,471h1v1h-1zM678,489h1v1h-1zM678,507h1v1h-1zM678,524h1v1h-1zM678,542h1v1h-1zM678,560h1v1h-1zM678,578h1v1h-1zM678,595h1v1h-1zM695,81h1v1h-1zM695,98h1v1h-1zM695,116h1v1h-1zM695,134h1v1h-1zM695,152h1v1h-1zM695,169h1v1h-1zM695,187h1v1h-1zM695,205h1v1h-1zM695,223h1v1h-1zM695,240h1v1h-1zM695,258h1v1h-1zM695,276h1v1h-1zM695,294h1v1h-1zM695,311h1v1h-1zM695,329h1v1h-1zM695,347h1v1h-1zM695,365h1v1h-1zM695,382h1v1h-1zM695,400h1v1h-1zM695,418h1v1h-1zM695,436h1v1h-1zM695,453h1v1h-1zM695,471h1v1h-1zM695,489h1v1h-1zM695,507h1v1h-1zM695,524h1v1h-1zM695,542h1v1h-1zM695,560h1v1h-1zM695,578h1v1h-1zM695,595h1v1h-1zM713,81h1v1h-1zM713,98h1v1h-1zM713,116h1v1h-1zM713,134h1v1h-1zM713,152h1v1h-1zM713,169h1v1h-1zM713,187h1v1h-1zM713,205h1v1h-1zM713,223h1v1h-1zM713,240h1v1h-1zM713,258h1v1h-1zM713,276h1v1h-1zM713,294h1v1h-1zM713,311h1v1h-1zM713,329h1v1h-1zM713,347h1v1h-1zM713,365h1v1h-1zM713,382h1v1h-1zM713,400h1v1h-1zM713,418h1v1h-1zM713,436h1v1h-1zM713,453h1v1h-1zM713,471h1v1h-1zM713,489h1v1h-1zM713,507h1v1h-1zM713,524h1v1h-1zM713,542h1v1h-1zM713,560h1v1h-1zM713,578h1v1h-1zM713,595h1v1h-1zM731,81h1v1h-1zM731,98h1v1h-1zM731,116h1v1h-1zM731,134h1v1h-1zM731,152h1v1h-1zM731,169h1v1h-1zM731,187h1v1h-1zM731,205h1v1h-1zM731,223h1v1h-1zM731,240h1v1h-1zM731,258h1v1h-1zM731,276h1v1h-1zM731,294h1v1h-1zM731,311h1v1h-1zM731,329h1v1h-1zM731,347h1v1h-1zM731,365h1v1h-1zM731,382h1v1h-1zM731,400h1v1h-1zM731,418h1v1h-1zM731,436h1v1h-1zM731,453h1v1h-1zM731,471h1v1h-1zM731,489h1v1h-1zM731,507h1v1h-1zM731,524h1v1h-1zM731,542h1v1h-1zM731,560h1v1h-1zM731,578h1v1h-1zM731,595h1v1h-1zM749,81h1v1h-1zM749,98h1v1h-1zM749,116h1v1h-1zM749,134h1v1h-1zM749,152h1v1h-1zM749,169h1v1h-1zM749,187h1v1h-1zM749,205h1v1h-1zM749,223h1v1h-1zM749,240h1v1h-1zM749,258h1v1h-1zM749,276h1v1h-1zM749,294h1v1h-1zM749,311h1v1h-1zM749,329h1v1h-1zM749,347h1v1h-1zM749,365h1v1h-1zM749,382h1v1h-1zM749,400h1v1h-1zM749,418h1v1h-1zM749,436h1v1h-1zM749,453h1v1h-1zM749,471h1v1h-1zM749,489h1v1h-1zM749,507h1v1h-1zM749,524h1v1h-1zM749,542h1v1h-1zM749,560h1v1h-1zM749,578h1v1h-1zM749,595h1v1h-1zM766,81h1v1h-1zM766,98h1v1h-1zM766,116h1v1h-1zM766,134h1v1h-1zM766,152h1v1h-1zM766,169h1v1h-1zM766,187h1v1h-1zM766,205h1v1h-1zM766,223h1v1h-1zM766,240h1v1h-1zM766,258h1v1h-1zM766,276h1v1h-1zM766,294h1v1h-1zM766,311h1v1h-1zM766,329h1v1h-1zM766,347h1v1h-1zM766,365h1v1h-1zM766,382h1v1h-1zM766,400h1v1h-1zM766,418h1v1h-1zM766,436h1v1h-1zM766,453h1v1h-1zM766,471h1v1h-1zM766,489h1v1h-1zM766,507h1v1h-1zM766,524h1v1h-1zM766,542h1v1h-1zM766,560h1v1h-1zM766,578h1v1h-1zM766,595h1v1h-1zM784,81h1v1h-1zM784,98h1v1h-1zM784,116h1v1h-1zM784,134h1v1h-1zM784,152h1v1h-1zM784,169h1v1h-1zM784,187h1v1h-1zM784,205h1v1h-1zM784,223h1v1h-1zM784,240h1v1h-1zM784,258h1v1h-1zM784,276h1v1h-1zM784,294h1v1h-1zM784,311h1v1h-1zM784,329h1v1h-1zM784,347h1v1h-1zM784,365h1v1h-1zM784,382h1v1h-1zM784,400h1v1h-1zM784,418h1v1h-1zM784,436h1v1h-1zM784,453h1v1h-1zM784,471h1v1h-1zM784,489h1v1h-1zM784,507h1v1h-1zM784,524h1v1h-1zM784,542h1v1h-1zM784,560h1v1h-1zM784,578h1v1h-1zM784,595h1v1h-1zM802,81h1v1h-1zM802,98h1v1h-1zM802,116h1v1h-1zM802,134h1v1h-1zM802,152h1v1h-1zM802,169h1v1h-1zM802,187h1v1h-1zM802,205h1v1h-1zM802,223h1v1h-1zM802,240h1v1h-1zM802,258h1v1h-1zM802,276h1v1h-1zM802,294h1v1h-1zM802,311h1v1h-1zM802,329h1v1h-1zM802,347h1v1h-1zM802,365h1v1h-1zM802,382h1v1h-1zM802,400h1v1h-1zM802,418h1v1h-1zM802,436h1v1h-1zM802,453h1v1h-1zM802,471h1v1h-1zM802,489h1v1h-1zM802,507h1v1h-1zM802,524h1v1h-1zM802,542h1v1h-1zM802,560h1v1h-1zM802,578h1v1h-1zM802,595h1v1h-1zM820,81h1v1h-1zM820,98h1v1h-1zM820,116h1v1h-1zM820,134h1v1h-1zM820,152h1v1h-1zM820,169h1v1h-1zM820,187h1v1h-1zM820,205h1v1h-1zM820,223h1v1h-1zM820,240h1v1h-1zM820,258h1v1h-1zM820,276h1v1h-1zM820,294h1v1h-1zM820,311h1v1h-1zM820,329h1v1h-1zM820,347h1v1h-1zM820,365h1v1h-1zM820,382h1v1h-1zM820,400h1v1h-1zM820,418h1v1h-1zM820,436h1v1h-1zM820,453h1v1h-1zM820,471h1v1h-1zM820,489h1v1h-1zM820,507h1v1h-1zM820,524h1v1h-1zM820,542h1v1h-1zM820,560h1v1h-1zM820,578h1v1h-1zM820,595h1v1h-1zM837,81h1v1h-1zM837,98h1v1h-1zM837,116h1v1h-1zM837,134h1v1h-1zM837,152h1v1h-1zM837,169h1v1h-1zM837,187h1v1h-1zM837,205h1v1h-1zM837,223h1v1h-1zM837,240h1v1h-1zM837,258h1v1h-1zM837,276h1v1h-1zM837,294h1v1h-1zM837,311h1v1h-1zM837,329h1v1h-1zM837,347h1v1h-1zM837,365h1v1h-1zM837,382h1v1h-1zM837,400h1v1h-1zM837,418h1v1h-1zM837,436h1v1h-1zM837,453h1v1h-1zM837,471h1v1h-1zM837,489h1v1h-1zM837,507h1v1h-1zM837,524h1v1h-1zM837,542h1v1h-1zM837,560h1v1h-1zM837,578h1v1h-1zM837,595h1v1h-1zM855,81h1v1h-1zM855,98h1v1h-1zM855,116h1v1h-1zM855,134h1v1h-1zM855,152h1v1h-1zM855,169h1v1h-1zM855,187h1v1h-1zM855,205h1v1h-1zM855,223h1v1h-1zM855,240h1v1h-1zM855,258h1v1h-1zM855,276h1v1h-1zM855,294h1v1h-1zM855,311h1v1h-1zM855,329h1v1h-1zM855,347h1v1h-1zM855,365h1v1h-1zM855,382h1v1h-1zM855,400h1v1h-1zM855,418h1v1h-1zM855,436h1v1h-1zM855,453h1v1h-1zM855,471h1v1h-1zM855,489h1v1h-1zM855,507h1v1h-1zM855,524h1v1h-1zM855,542h1v1h-1zM855,560h1v1h-1zM855,578h1v1h-1zM855,595h1v1h-1zM873,81h1v1h-1zM873,98h1v1h-1zM873,116h1v1h-1zM873,134h1v1h-1zM873,152h1v1h-1zM873,169h1v1h-1zM873,187h1v1h-1zM873,205h1v1h-1zM873,223h1v1h-1zM873,240h1v1h-1zM873,258h1v1h-1zM873,276h1v1h-1zM873,294h1v1h-1zM873,311h1v1h-1zM873,329h1v1h-1zM873,347h1v1h-1zM873,365h1v1h-1zM873,382h1v1h-1zM873,400h1v1h-1zM873,418h1v1h-1zM873,436h1v1h-1zM873,453h1v1h-1zM873,471h1v1h-1zM873,489h1v1h-1zM873,507h1v1h-1zM873,524h1v1h-1zM873,542h1v1h-1zM873,560h1v1h-1zM873,578h1v1h-1zM873,595h1v1h-1zM891,81h1v1h-1zM891,98h1v1h-1zM891,116h1v1h-1zM891,134h1v1h-1zM891,152h1v1h-1zM891,169h1v1h-1zM891,187h1v1h-1zM891,205h1v1h-1zM891,223h1v1h-1zM891,240h1v1h-1zM891,258h1v1h-1zM891,276h1v1h-1zM891,294h1v1h-1zM891,311h1v1h-1zM891,329h1v1h-1zM891,347h1v1h-1zM891,365h1v1h-1zM891,382h1v1h-1zM891,400h1v1h-1zM891,418h1v1h-1zM891,436h1v1h-1zM891,453h1v1h-1zM891,471h1v1h-1zM891,489h1v1h-1zM891,507h1v1h-1zM891,524h1v1h-1zM891,542h1v1h-1zM891,560h1v1h-1zM891,578h1v1h-1zM891,595h1v1h-1z" fill="#3f3f3f" stroke="none" stroke-width="1" />
<rect x="0" y="382" width="900" height="1" fill="#404040" />
<rect x="114" y="356" width="707" height="1" fill="#00ccee" />
<g shape-rendering="geometricPrecision" fill="#cccccc">
<path d="M5.5,342.9 H10 V376.9 H5.5 V361 H0 V357.1 H5.5 Z" fill="#cccccc" stroke="none" stroke-width="1" />
<path d="M19.5,342.9 H41 V346.8 H24.3 V357.1 H40.2 V361 H24.3 V372.6 H41.2 V376.9 H19.5 Z" fill="#cccccc" stroke="none" stroke-width="1" />
<path d="M48.2,342.9 H54.8 L63.8,367 L72.8,342.9 H79.4 V376.9 H74.8 V348.5 L66.4,370.3 H61 L52.8,348.5 V376.9 H48.2 Z" fill="#cccccc" stroke="none" stroke-width="1" />
</g>
<text x="638.4" y="352.5" font-family="Liberation Sans" font-size="19.3" fill="#cccccc" textLength="182" lengthAdjust="spacingAndGlyphs" >22-10-22  22:29:53</text>
<text x="122.6" y="352.3" font-family="Liberation Sans" font-size="19.3" fill="#cccccc" >S</text>
<text x="123.0" y="378.6" font-family="Liberation Sans" font-size="19.3" fill="#cccccc" >t</text>
<g shape-rendering="crispEdges">
<path d="M421,98h2v1h-2zM425,98h2v1h-2zM429,98h2v1h-2zM433,98h2v1h-2zM437,98h2v1h-2zM441,98h2v1h-2zM445,98h2v1h-2zM449,98h2v1h-2zM453,98h2v1h-2zM457,98h2v1h-2zM461,98h2v1h-2zM465,98h2v1h-2zM469,98h2v1h-2zM473,98h2v1h-2zM477,98h2v1h-2zM481,98h2v1h-2zM485,98h2v1h-2zM489,98h2v1h-2zM493,98h2v1h-2zM497,98h2v1h-2zM501,98h2v1h-2zM505,98h2v1h-2zM509,98h2v1h-2zM513,98h2v1h-2zM517,98h2v1h-2zM521,98h2v1h-2zM525,98h2v1h-2zM529,98h2v1h-2zM533,98h2v1h-2zM537,98h2v1h-2zM541,98h2v1h-2zM545,98h2v1h-2zM549,98h2v1h-2zM553,98h2v1h-2zM557,98h2v1h-2zM561,98h2v1h-2zM565,98h2v1h-2zM569,98h2v1h-2zM573,98h2v1h-2zM577,98h2v1h-2zM581,98h2v1h-2zM585,98h2v1h-2zM589,98h2v1h-2zM593,98h2v1h-2zM597,98h2v1h-2zM601,98h2v1h-2zM605,98h2v1h-2zM609,98h2v1h-2zM613,98h2v1h-2zM617,98h2v1h-2zM621,98h2v1h-2zM625,98h2v1h-2zM629,98h2v1h-2zM633,98h2v1h-2zM637,98h2v1h-2zM641,98h2v1h-2zM645,98h2v1h-2zM649,98h2v1h-2zM653,98h2v1h-2zM657,98h2v1h-2zM661,98h2v1h-2zM665,98h2v1h-2zM669,98h2v1h-2zM673,98h2v1h-2zM677,98h2v1h-2zM681,98h2v1h-2zM685,98h2v1h-2zM689,98h2v1h-2zM693,98h2v1h-2zM697,98h2v1h-2zM701,98h2v1h-2zM705,98h2v1h-2zM709,98h2v1h-2zM713,98h2v1h-2zM717,98h2v1h-2zM721,98h2v1h-2zM725,98h2v1h-2zM729,98h2v1h-2zM733,98h2v1h-2zM737,98h2v1h-2zM741,98h2v1h-2zM745,98h2v1h-2zM749,98h2v1h-2zM753,98h2v1h-2zM757,98h2v1h-2zM761,98h2v1h-2zM765,98h2v1h-2zM769,98h2v1h-2zM773,98h2v1h-2zM777,98h2v1h-2zM781,98h2v1h-2zM785,98h2v1h-2zM789,98h2v1h-2zM793,98h2v1h-2zM797,98h2v1h-2zM801,98h2v1h-2zM805,98h2v1h-2zM809,98h2v1h-2zM813,98h2v1h-2zM817,98h2v1h-2zM821,98h2v1h-2zM825,98h2v1h-2zM829,98h2v1h-2zM833,98h2v1h-2zM837,98h2v1h-2zM841,98h2v1h-2zM845,98h2v1h-2zM849,98h2v1h-2zM853,98h2v1h-2zM857,98h2v1h-2zM861,98h2v1h-2zM865,98h2v1h-2zM869,98h2v1h-2zM873,98h2v1h-2zM877,98h2v1h-2zM881,98h2v1h-2zM885,98h2v1h-2zM889,98h2v1h-2zM893,98h2v1h-2zM897,98h2v1h-2zM420,81h1v2h-1zM420,85h1v2h-1zM420,89h1v2h-1zM420,93h1v2h-1z" fill="#4a4a4a" stroke="none" stroke-width="1" />
<text x="422.5" y="89.5" font-family="Liberation Sans" font-size="18.4" fill="#88dd00" textLength="40" lengthAdjust="spacingAndGlyphs" >time</text>
<path d="M419.8,120.3 L428.2,125.2 L419.8,129.9 H447.3 V137 L473.9,125.3 L447.3,113.8 V120.3 Z" fill="#88dd00" stroke="none" stroke-width="1" />
<text x="482.9" y="132" font-family="Liberation Sans" font-size="19" fill="#cccccc" textLength="103.4" lengthAdjust="spacingAndGlyphs" >load waves</text>
<rect x="416" y="191" width="55" height="16" fill="none" stroke="#4a4a4a" stroke-width="1" transform="translate(0.5,0.5)"/>
<text x="416" y="205" font-family="Liberation Sans" font-size="13.4" fill="#cccccc" textLength="54.5" lengthAdjust="spacingAndGlyphs" >STIMULI</text>
<rect x="411" y="214" width="81" height="1" fill="#404040" />
<rect x="411" y="302" width="81" height="1" fill="#404040" />
<rect x="411" y="214" width="1" height="89" fill="#404040" />
<rect x="491" y="214" width="1" height="89" fill="#404040" />
<rect x="420" y="311" width="81" height="1" fill="#404040" />
<rect x="500" y="223" width="1" height="89" fill="#404040" />
<rect x="420" y="303" width="1" height="9" fill="#404040" />
<rect x="492" y="223" width="9" height="1" fill="#404040" />
<rect x="420" y="223" width="19" height="1" fill="#404040" />
<rect x="420" y="231" width="45" height="1" fill="#404040" />
<rect x="420" y="240" width="37" height="1" fill="#404040" />
<rect x="420" y="249" width="19" height="1" fill="#404040" />
<rect x="420" y="258" width="37" height="1" fill="#404040" />
<rect x="420" y="267" width="28" height="1" fill="#404040" />
<rect x="420" y="276" width="28" height="1" fill="#404040" />
<rect x="420" y="285" width="63" height="1" fill="#404040" />
<rect x="420" y="294" width="19" height="1" fill="#404040" />
<rect x="154" y="81" width="1" height="222" fill="#88dd00" />
<rect x="260" y="81" width="1" height="222" fill="#88dd00" />
<rect x="154" y="302" width="107" height="1" fill="#88dd00" />
<rect x="198" y="81" width="19" height="1" fill="#88dd00" />
<rect x="163" y="89" width="1" height="28" fill="#88dd00" />
<rect x="163" y="116" width="10" height="1" fill="#88dd00" />
<rect x="172" y="107" width="1" height="10" fill="#88dd00" />
<line x1="172.5" y1="107.5" x2="180.5" y2="125.5" stroke="#88dd00" stroke-width="1"/>
<rect x="180" y="107" width="1" height="19" fill="#88dd00" />
<line x1="180.5" y1="107.5" x2="189.5" y2="125.5" stroke="#88dd00" stroke-width="1"/>
<rect x="189" y="116" width="1" height="10" fill="#88dd00" />
<rect x="189" y="116" width="11" height="1" fill="#88dd00" />
<rect x="199" y="107" width="1" height="10" fill="#88dd00" />
<line x1="199.5" y1="107.5" x2="207.5" y2="125.5" stroke="#88dd00" stroke-width="1"/>
<rect x="207" y="107" width="1" height="19" fill="#88dd00" />
<line x1="207.5" y1="107.5" x2="216.5" y2="125.5" stroke="#88dd00" stroke-width="1"/>
<rect x="216" y="116" width="1" height="10" fill="#88dd00" />
<rect x="216" y="116" width="11" height="1" fill="#88dd00" />
<rect x="226" y="107" width="1" height="10" fill="#88dd00" />
<line x1="226.5" y1="107.5" x2="234.5" y2="125.5" stroke="#88dd00" stroke-width="1"/>
<rect x="234" y="107" width="1" height="19" fill="#88dd00" />
<line x1="234.5" y1="107.5" x2="243.5" y2="125.5" stroke="#88dd00" stroke-width="1"/>
<rect x="243" y="116" width="1" height="10" fill="#88dd00" />
<rect x="243" y="116" width="9" height="1" fill="#88dd00" />
<rect x="251" y="89" width="1" height="28" fill="#88dd00" />
<rect x="194" y="116" width="1" height="63" fill="#88dd00" />
<rect x="220" y="116" width="1" height="63" fill="#88dd00" />
<rect x="154" y="152" width="3" height="1" fill="#88dd00" />
<rect x="181" y="152" width="5" height="1" fill="#88dd00" />
<rect x="185" y="152" width="1" height="27" fill="#88dd00" />
<line x1="180.5" y1="178.5" x2="189.5" y2="195.5" stroke="#88dd00" stroke-width="1"/>
<line x1="198.5" y1="178.5" x2="189.5" y2="195.5" stroke="#88dd00" stroke-width="1"/>
<rect x="180" y="178" width="19" height="1" fill="#88dd00" />
<rect x="189" y="195" width="1" height="29" fill="#88dd00" />
<line x1="216.5" y1="178.5" x2="225.5" y2="195.5" stroke="#88dd00" stroke-width="1"/>
<line x1="234.5" y1="178.5" x2="225.5" y2="195.5" stroke="#88dd00" stroke-width="1"/>
<rect x="216" y="178" width="19" height="1" fill="#88dd00" />
<rect x="225" y="195" width="1" height="29" fill="#88dd00" />
<rect x="229" y="169" width="1" height="10" fill="#88dd00" />
<rect x="229" y="169" width="15" height="1" fill="#88dd00" />
<rect x="243" y="169" width="1" height="39" fill="#88dd00" />
<rect x="243" y="220" width="1" height="4" fill="#88dd00" />
<rect x="243" y="223" width="33" height="1" fill="#88dd00" />
<rect x="220" y="160" width="32" height="1" fill="#88dd00" />
<rect x="251" y="160" width="1" height="48" fill="#88dd00" />
<rect x="251" y="227" width="1" height="68" fill="#88dd00" />
<rect x="251" y="294" width="25" height="1" fill="#88dd00" />
<rect x="196" y="150" width="1" height="4" fill="#88dd00" />
<rect x="198" y="149" width="1" height="6" fill="#88dd00" />
<rect x="200" y="147" width="1" height="10" fill="#88dd00" />
<rect x="200" y="152" width="4" height="1" fill="#88dd00" />
<line x1="203.5" y1="152.5" x2="206.5" y2="158.5" stroke="#88dd00" stroke-width="1"/>
<rect x="203" y="158" width="12" height="1" fill="#88dd00" />
<rect x="208" y="158" width="1" height="20" fill="#88dd00" />
<line x1="210.5" y1="158.5" x2="214.5" y2="152.5" stroke="#88dd00" stroke-width="1"/>
<rect x="214" y="152" width="25" height="1" fill="#88dd00" />
<rect x="261" y="152" width="15" height="1" fill="#88dd00" />
<path d="M203.5,152.5 L206,153 L204.5,155 Z" fill="#88dd00" stroke="none" stroke-width="1" />
<circle cx="208.5" cy="179" r="1.6" fill="none" stroke="#88dd00" stroke-width="1"/>
<line x1="208.5" y1="181.5" x2="201.5" y2="191.5" stroke="#88dd00" stroke-width="1"/>
<line x1="208.5" y1="181.5" x2="215.5" y2="191.5" stroke="#88dd00" stroke-width="1"/>
<rect x="201" y="191" width="15" height="1" fill="#88dd00" />
<rect x="208" y="191" width="1" height="68" fill="#88dd00" />
<circle cx="225.5" cy="252" r="2.9" fill="none" stroke="#88dd00" stroke-width="1"/>
<path d="M180.5,223.5 H234.5 V249.5 H180.5 Z" fill="none" stroke="#ff7777" stroke-width="1" />
<text x="188" y="233" font-family="Liberation Sans" font-size="9.8" fill="#cccccc" textLength="6.2" lengthAdjust="spacingAndGlyphs" >S</text>
<text x="223" y="233" font-family="Liberation Sans" font-size="9.8" fill="#cccccc" textLength="6.6" lengthAdjust="spacingAndGlyphs" >R</text>
<text x="188" y="245" font-family="Liberation Sans" font-size="9.8" fill="#cccccc" textLength="7.2" lengthAdjust="spacingAndGlyphs" >Q</text>
<rect x="189" y="250" width="1" height="9" fill="#88dd00" />
<rect x="139" y="223" width="29" height="1" fill="#88dd00" />
<rect x="167" y="223" width="1" height="18" fill="#88dd00" />
<line x1="167.5" y1="240.5" x2="158.5" y2="249.5" stroke="#88dd00" stroke-width="1"/>
<line x1="167.5" y1="240.5" x2="176.5" y2="249.5" stroke="#88dd00" stroke-width="1"/>
<rect x="158" y="249" width="19" height="1" fill="#88dd00" />
<rect x="167" y="249" width="1" height="10" fill="#88dd00" />
<rect x="167" y="258" width="42" height="1" fill="#88dd00" />
<rect x="225" y="255" width="1" height="40" fill="#88dd00" />
<rect x="139" y="294" width="87" height="1" fill="#88dd00" />
<rect x="139" y="81" width="16" height="1" fill="#88dd00" />
<rect x="260" y="81" width="16" height="1" fill="#88dd00" />
<rect x="139" y="152" width="16" height="1" fill="#88dd00" />
<rect x="261" y="152" width="15" height="1" fill="#88dd00" />
<rect x="134" y="78" width="5" height="6" fill="#dd2200" />
<rect x="135" y="79" width="3" height="4" fill="#bb2200" />
<rect x="134" y="149" width="5" height="6" fill="#dd2200" />
<rect x="135" y="150" width="3" height="4" fill="#bb2200" />
<rect x="134" y="291" width="5" height="6" fill="#dd2200" />
<rect x="135" y="292" width="3" height="4" fill="#bb2200" />
<rect x="134" y="220" width="5" height="6" fill="#dd2200" />
<rect x="135" y="221" width="3" height="4" fill="#ff0000" />
<rect x="136" y="222" width="1" height="2" fill="#cc1100" />
<rect x="276" y="78" width="5" height="6" fill="#dd2200" />
<rect x="277" y="79" width="3" height="4" fill="#bb2200" />
<rect x="276" y="149" width="5" height="6" fill="#dd2200" />
<rect x="277" y="150" width="3" height="4" fill="#bb2200" />
<rect x="276" y="220" width="5" height="6" fill="#dd2200" />
<rect x="277" y="221" width="3" height="4" fill="#bb2200" />
<rect x="276" y="291" width="5" height="6" fill="#dd2200" />
<rect x="277" y="292" width="3" height="4" fill="#ffff00" />
<rect x="278" y="293" width="1" height="2" fill="#bb2200" />
</g>
<text x="100.8" y="89" font-family="Liberation Sans" font-size="16.2" fill="#00ccee" textLength="29.5" lengthAdjust="spacingAndGlyphs" >VSS</text>
<text x="92.8" y="160" font-family="Liberation Sans" font-size="16.2" fill="#00ccee" textLength="37.2" lengthAdjust="spacingAndGlyphs" >TRIG</text>
<text x="96.8" y="231" font-family="Liberation Sans" font-size="16.2" fill="#ff0000" textLength="32.5" lengthAdjust="spacingAndGlyphs" >OUT</text>
<text x="63.0" y="302" font-family="Liberation Sans" font-size="16.2" fill="#00ccee" textLength="67.2" lengthAdjust="spacingAndGlyphs" >VSUPPLY</text>
<text x="285.3" y="89" font-family="Liberation Sans" font-size="16.2" fill="#00ccee" textLength="65.8" lengthAdjust="spacingAndGlyphs" >VSUPPLY</text>
<text x="285.0" y="160" font-family="Liberation Sans" font-size="16.2" fill="#00ccee" textLength="27.3" lengthAdjust="spacingAndGlyphs" >DIS</text>
<text x="284.4" y="231" font-family="Liberation Sans" font-size="16.2" fill="#00ccee" textLength="38.2" lengthAdjust="spacingAndGlyphs" >TRIG</text>
<text x="285.0" y="302" font-family="Liberation Sans" font-size="16.2" fill="#ffff00" textLength="39.2" lengthAdjust="spacingAndGlyphs" >CTRL</text>
<text x="158.8" y="86" font-family="Liberation Sans" font-size="10" fill="#cccccc" textLength="21" lengthAdjust="spacingAndGlyphs" >GND</text>
<text x="239.2" y="86" font-family="Liberation Sans" font-size="10" fill="#cccccc" textLength="18.2" lengthAdjust="spacingAndGlyphs" >VCC</text>
<text x="158.9" y="157" font-family="Liberation Sans" font-size="10" fill="#cccccc" textLength="22" lengthAdjust="spacingAndGlyphs" >TRIG</text>
<text x="240.2" y="157" font-family="Liberation Sans" font-size="10" fill="#cccccc" textLength="15.4" lengthAdjust="spacingAndGlyphs" >DIS</text>
<text x="155.9" y="220" font-family="Liberation Sans" font-size="10" fill="#cccccc" textLength="19.9" lengthAdjust="spacingAndGlyphs" >OUT</text>
<text x="229.6" y="220" font-family="Liberation Sans" font-size="10" fill="#cccccc" textLength="31" lengthAdjust="spacingAndGlyphs" >THRES</text>
<text x="159.1" y="291" font-family="Liberation Sans" font-size="10" fill="#cccccc" textLength="36.2" lengthAdjust="spacingAndGlyphs" >RESETB</text>
<text x="229" y="291" font-family="Liberation Sans" font-size="10" fill="#cccccc" textLength="22.2" lengthAdjust="spacingAndGlyphs" >CTRL</text>
<text x="182.0" y="102" font-family="Liberation Sans" font-size="14.2" fill="#cccccc" textLength="46" lengthAdjust="spacingAndGlyphs" >ne555</text>
</g></svg>
<g shape-rendering="geometricPrecision" fill="#000">
<path d="M3.5,39.5 H9.5 L11.5,41.6 H21.8 Q22.8,41.6 22.8,42.6 V43.8 H3.5 Z" fill="#000" stroke="none" stroke-width="1" />
<path d="M1.3,44.8 H24.8 L23.9,57.8 H2.5 Z" fill="#000" stroke="none" stroke-width="1" />
<path d="M30.8,39.4 H45.5 L48.6,42.5 V56.9 Q48.6,58.4 47.1,58.4 H30.8 Q29.3,58.4 29.3,56.9 V40.9 Q29.3,39.4 30.8,39.4 Z M34.4,41.1 V47.5 H43.6 V41.1 Z" fill="#000" stroke="none" stroke-width="1" fill-rule="evenodd"/>
<rect x="40.4" y="42" width="1.8" height="3.8" fill="#000" />
<path d="M64.5,44.8 H55 Q53,44.8 53,46.8 V53.7 Q53,55.7 55,55.7 H74.7 Q76.7,55.7 76.7,53.7 V46.8 Q76.7,44.8 74.7,44.8 H70.2 V46.6 H73.2 V52.4 H56.8 V46.6 H64.5 Z" fill="#000" stroke="none" stroke-width="1" />
<path d="M64.6,40.6 L68.8,44.6 L64.6,48.6 Z" fill="#000" stroke="none" stroke-width="1" />
<path d="M84,48.2 L92.2,40.6 V45.2 C99,45 104,49 106,56.4 C102,51.8 97,50.6 92.2,50.7 V56.2 Z" fill="#000" stroke="none" stroke-width="1" />
<path d="M131.9,48.2 L123.7,40.6 V45.2 C116.9,45 111.9,49 109.9,56.4 C113.9,51.8 118.9,50.6 123.7,50.7 V56.2 Z" fill="#000" stroke="none" stroke-width="1" />
<circle cx="140.4" cy="43.8" r="3.1" fill="none" stroke="#000" stroke-width="2.1"/>
<circle cx="140.4" cy="54.3" r="3.1" fill="none" stroke="#000" stroke-width="2.1"/>
<line x1="143.3" y1="46.2" x2="155.6" y2="53.8" stroke="#000" stroke-width="2.6" stroke-linecap="round"/>
<line x1="143.3" y1="51.9" x2="147.5" y2="49.4" stroke="#000" stroke-width="2.6" />
<line x1="151.3" y1="46.2" x2="155.6" y2="43.8" stroke="#000" stroke-width="2.6" stroke-linecap="round"/>
<path d="M163.3,38.1 H175.4 V53.3 H163.3 Z" fill="none" stroke="#000" stroke-width="2.1" />
<circle cx="181.4" cy="42.9" r="1.25"/>
<circle cx="181.4" cy="47.6" r="1.25"/>
<circle cx="181.4" cy="52.4" r="1.25"/>
<circle cx="181.4" cy="57.1" r="1.25"/>
<circle cx="170.3" cy="57.1" r="1.25"/>
<circle cx="175.9" cy="57.1" r="1.25"/>
<rect x="175.4" y="42" width="1.6" height="1.8" fill="#000" />
<path d="M196.5,41.5 H208.4 V56.8 H196.5 Z" fill="none" stroke="#000" stroke-width="2.3" />
<circle cx="189.5" cy="38.1" r="1.25"/>
<circle cx="195" cy="38.1" r="1.25"/>
<circle cx="200.6" cy="38.1" r="1.25"/>
<circle cx="189.5" cy="42.9" r="1.25"/>
<circle cx="189.5" cy="47.6" r="1.25"/>
<circle cx="189.5" cy="52.4" r="1.25"/>
<rect x="194.2" y="51.5" width="2" height="1.8" fill="#000" />
<line x1="220.5" y1="44" x2="229.5" y2="53.3" stroke="#000" stroke-width="2.6" stroke-linecap="round"/>
<line x1="229.5" y1="44" x2="220.5" y2="53.3" stroke="#000" stroke-width="2.6" stroke-linecap="round"/>
<path d="M244.9,49.6 L244.4,43.6 L260.1,38.5 L262.2,43.6" fill="none" stroke="#000" stroke-width="2.7" stroke-linejoin="miter"/>
<path d="M248.1,46.9 H267 V59.9 H248.1 Z M250.6,50 V57.4 H264.5 V50 L262.5,49.6 L257.5,53 L255,50.5 L252.5,52.5 Z" fill="#000" stroke="none" stroke-width="1" fill-rule="evenodd"/>
<path d="M269.2,44.7 L273.9,40.7 V43.1 H286 V46.2 H273.9 V49 Z" fill="#000" stroke="none" stroke-width="1" />
<path d="M293.1,53.1 L288.4,49 V51.5 H276 V54.9 H288.4 V57.1 Z" fill="#000" stroke="none" stroke-width="1" />
<path d="M305.8,40.4 H316 V48.9 H319.8 L310.9,57.7 L302.2,48.9 H305.8 Z" fill="#000" stroke="none" stroke-width="1" />
<path d="M332.8,37.1 H339.9 V41.3 H343.4 L336.4,47.1 L329.3,41.3 H332.8 Z" fill="#000" stroke="none" stroke-width="1" />
<path d="M329.4,49 H338.5 Q343.5,49 344.7,54.1 Q343.5,59.1 338.5,59.1 H329.4 Z" fill="none" stroke="#000" stroke-width="2.1" />
<line x1="325.1" y1="52" x2="329" y2="52" stroke="#000" stroke-width="1.8" />
<line x1="325.1" y1="57" x2="329" y2="57" stroke="#000" stroke-width="1.8" />
<line x1="344.7" y1="54.2" x2="349" y2="54.2" stroke="#000" stroke-width="1.8" />
<path d="M363,40.3 L371.8,48.9 H367.7 V57.1 H358.5 V48.9 H354.1 Z" fill="#000" stroke="none" stroke-width="1" />
<path d="M404.9,37.4 Q397,42.5 387.6,50.6 L391.6,54.3 Q399.5,45.5 404.9,37.4 Z" fill="#000" stroke="none" stroke-width="1" />
<path d="M383.5,53.5 Q386.5,52 389.5,55.5 Q389,58.5 385.5,59 Q383.5,59.5 381.4,59.9 Q382.5,57 383.5,53.5 Z" fill="#000" stroke="none" stroke-width="1" />
<circle cx="419" cy="48.7" r="5.5" fill="none" stroke="#000" stroke-width="2.1"/>
<path d="M419,43.2 A5.5,5.5 0 0 1 419,54.2 Z" fill="#000" stroke="none" stroke-width="1" />
<line x1="419" y1="37.8" x2="419" y2="39.9" stroke="#000" stroke-width="2.0" stroke-linecap="round"/>
<line x1="419" y1="57.8" x2="419" y2="59.9" stroke="#000" stroke-width="2.0" stroke-linecap="round"/>
<line x1="407.4" y1="48.7" x2="410" y2="48.7" stroke="#000" stroke-width="2.0" stroke-linecap="round"/>
<line x1="428" y1="48.7" x2="430.6" y2="48.7" stroke="#000" stroke-width="2.0" stroke-linecap="round"/>
<line x1="410.5" y1="40.9" x2="411.9" y2="42.3" stroke="#000" stroke-width="2.0" stroke-linecap="round"/>
<line x1="427.5" y1="40.9" x2="426.1" y2="42.3" stroke="#000" stroke-width="2.0" stroke-linecap="round"/>
<line x1="410.5" y1="56.5" x2="411.9" y2="55.1" stroke="#000" stroke-width="2.0" stroke-linecap="round"/>
<line x1="427.5" y1="56.5" x2="426.1" y2="55.1" stroke="#000" stroke-width="2.0" stroke-linecap="round"/>
<path d="M442.2,43 H452 Q455.5,43 457.4,48.9 Q455.5,54.8 452,54.8 H442.2 Z" fill="none" stroke="#000" stroke-width="2.2" />
<line x1="437.1" y1="45" x2="442" y2="45" stroke="#000" stroke-width="2" />
<line x1="437.1" y1="51.8" x2="442" y2="51.8" stroke="#000" stroke-width="2" />
<line x1="457" y1="48.7" x2="460.7" y2="48.7" stroke="#000" stroke-width="2" />
<line x1="469.2" y1="39.1" x2="474.3" y2="39.1" stroke="#000" stroke-width="2.2" stroke-linecap="round"/>
<line x1="469.2" y1="45" x2="481.8" y2="45" stroke="#000" stroke-width="2.2" stroke-linecap="round"/>
<line x1="469.2" y1="50.6" x2="477.1" y2="50.6" stroke="#000" stroke-width="2.2" stroke-linecap="round"/>
<line x1="469.2" y1="56.2" x2="482.7" y2="56.2" stroke="#000" stroke-width="2.2" stroke-linecap="round"/>
<line x1="500.9" y1="44.3" x2="500.9" y2="53.8" stroke="#000" stroke-width="2.2" />
<circle cx="500.9" cy="41.9" r="2.1" fill="#fff" stroke="#333" stroke-width="1.3"/>
<circle cx="500.9" cy="56.2" r="2.1" fill="#fff" stroke="#333" stroke-width="1.3"/>
<line x1="521.2" y1="48.9" x2="533" y2="48.9" stroke="#000" stroke-width="2.3" stroke-linecap="round"/>
<path d="M545.9,39.5 H560 V58.5 H545.9 Z" fill="none" stroke="#000" stroke-width="2.2" />
<path d="M570.1,46.9 L581,38.4 L581.3,46.9 L588.2,50.9 L577.3,50.9 L573.9,58.8 Z" fill="none" stroke="#000" stroke-width="2.2" stroke-linejoin="miter"/>
<path d="M596.7,39.5 A18.5,19 0 0 1 614.6,58.3" fill="none" stroke="#000" stroke-width="2.2" stroke-linecap="round"/>
<circle cx="631.1" cy="48.6" r="10.1" fill="none" stroke="#000" stroke-width="2.2"/>
<circle cx="657.2" cy="45.4" r="6" fill="none" stroke="#000" stroke-width="2.3"/>
<line x1="662" y1="50.3" x2="669.3" y2="57.5" stroke="#000" stroke-width="2.8" stroke-linecap="round"/>
<path d="M693.4,46.6 L700.0,46.6 L693.4,40.0 Z" fill="#000" stroke="none" stroke-width="1" />
<line x1="695.9" y1="44.1" x2="699.9" y2="40.1" stroke="#000" stroke-width="2.6" stroke-linecap="round"/>
<path d="M688.4,51.5 L681.8,51.5 L688.4,58.1 Z" fill="#000" stroke="none" stroke-width="1" />
<line x1="685.9" y1="54.0" x2="681.9" y2="58.0" stroke="#000" stroke-width="2.6" stroke-linecap="round"/>
<path d="M726.3,39.4 L719.6999999999999,39.4 L726.3,46.0 Z" fill="#000" stroke="none" stroke-width="1" />
<line x1="723.8" y1="41.9" x2="719.8" y2="45.9" stroke="#000" stroke-width="2.6" stroke-linecap="round"/>
<path d="M707.4,58.4 L714.0,58.4 L707.4,51.8 Z" fill="#000" stroke="none" stroke-width="1" />
<line x1="709.9" y1="55.9" x2="713.9" y2="51.9" stroke="#000" stroke-width="2.6" stroke-linecap="round"/>
<path d="M823,46.6 H828.2 V42.8 L835.1,48.7 L828.2,54.9 V51.2 H823 Z" fill="#000" stroke="none" stroke-width="1" />
<path d="M836.8,41.4 H846.2 V57.3 H836.8 Z" fill="none" stroke="#000" stroke-width="1.6" />
<line x1="838.8" y1="44.5" x2="844.2" y2="44.5" stroke="#000" stroke-width="1.25" stroke-linecap="round"/>
<line x1="838.8" y1="48.5" x2="844.2" y2="48.5" stroke="#000" stroke-width="1.25" stroke-linecap="round"/>
<line x1="838.8" y1="51.5" x2="844.2" y2="51.5" stroke="#000" stroke-width="1.25" stroke-linecap="round"/>
<line x1="838.8" y1="54.5" x2="844.2" y2="54.5" stroke="#000" stroke-width="1.25" stroke-linecap="round"/>
<path d="M855,41.9 L866.8,48.7 L855,55.9 Z" fill="#000" stroke="none" stroke-width="1" />
<line x1="876.5" y1="39.2" x2="876.5" y2="59.2" stroke="#000" stroke-width="1.5" />
<line x1="875.1" y1="57.3" x2="898.7" y2="57.3" stroke="#000" stroke-width="1.5" />
<polyline points="876.5,44.9 882.3,44.9 882.3,40.6 884.8,40.6 884.8,44.9 887.9,44.9 887.9,40.6 890.5,40.6 890.5,44.9 893.8,44.9 893.8,40.6 898.7,40.6" fill="none" stroke="#000" stroke-width="2" />
<polyline points="876.5,51.8 884.8,51.8 884.8,48 898.7,48" fill="none" stroke="#000" stroke-width="2" />
</g>
<rect x="130" y="337" width="510" height="260" fill="#1a1a1a" />
<rect x="131" y="338" width="507" height="257" fill="#6a6a6a" />
<rect x="132" y="339" width="506" height="256" fill="#4a4a4a" />
<rect x="638" y="339" width="1" height="257" fill="#3a3a3a" />
<rect x="132" y="595" width="507" height="1" fill="#3a3a3a" />
<rect x="134" y="340" width="502" height="15" fill="#808080" />
<path d="M135,344 L140,344 L148,353 L143,353 Z" fill="#ff0000" stroke="none" stroke-width="1" shape-rendering="geometricPrecision"/>
<line x1="136.3" y1="352.7" x2="146.7" y2="344.3" stroke="#ff0000" stroke-width="1.1" shape-rendering="geometricPrecision"/>
<text x="158" y="350.5" font-family="Liberation Sans" font-size="11" fill="#ffffff" textLength="65" lengthAdjust="spacingAndGlyphs" >Edit Properties</text>
<rect x="596" y="343" width="12" height="12" fill="#c9c9c9" />
<rect x="596" y="343" width="12" height="1" fill="#e8e8e8" />
<rect x="596" y="343" width="1" height="12" fill="#e8e8e8" />
<rect x="610" y="343" width="13" height="12" fill="#c9c9c9" />
<rect x="610" y="343" width="13" height="1" fill="#e8e8e8" />
<rect x="610" y="343" width="1" height="12" fill="#e8e8e8" />
<rect x="624" y="343" width="12" height="12" fill="#c9c9c9" />
<rect x="624" y="343" width="12" height="1" fill="#e8e8e8" />
<rect x="624" y="343" width="1" height="12" fill="#e8e8e8" />
<rect x="600" y="352" width="7" height="2" fill="#000" />
<path d="M613.5,346 h8 v7.5 h-8 z" fill="none" stroke="#000" stroke-width="1.4" />
<rect x="613" y="345" width="9" height="2.4" fill="#000" />
<line x1="627" y1="346" x2="634.5" y2="352.5" stroke="#000" stroke-width="1.6" shape-rendering="geometricPrecision"/>
<line x1="634.5" y1="346" x2="627" y2="352.5" stroke="#000" stroke-width="1.6" shape-rendering="geometricPrecision"/>
<rect x="134" y="355" width="502" height="238" fill="#d9d9d9" />
<text x="136.3" y="368" font-family="Liberation Sans" font-size="11" fill="#000" textLength="25.5" lengthAdjust="spacingAndGlyphs" >Path:</text>
<rect x="164" y="356" width="294" height="17" fill="#ffffff" />
<rect x="164" y="356" width="293" height="16" fill="#7f7f7f" />
<rect x="165" y="357" width="292" height="15" fill="#d9d9d9" />
<text x="165.6" y="368" font-family="Liberation Sans" font-size="11" fill="#000" textLength="290.8" lengthAdjust="spacingAndGlyphs" >/home/schippes/xschem-repo/trunk/xschem_library/devices</text>
<text x="138" y="390" font-family="Liberation Sans" font-size="11" fill="#000" textLength="36" lengthAdjust="spacingAndGlyphs" >Symbol</text>
<rect x="182" y="378" width="184" height="17" fill="#eeeeee" />
<rect x="182" y="378" width="183" height="16" fill="#7f7f7f" />
<rect x="183" y="379" width="182" height="15" fill="#ffffff" />
<text x="184" y="390" font-family="Liberation Sans" font-size="11" fill="#000" textLength="45.5" lengthAdjust="spacingAndGlyphs" >code.sym</text>
<rect x="372" y="375" width="37" height="23" fill="#7f7f7f" />
<rect x="372" y="375" width="36" height="22" fill="#ffffff" />
<rect x="373" y="376" width="35" height="21" fill="#d9d9d9" />
<text x="383.0" y="390" font-family="Liberation Sans" font-size="11" fill="#000" textLength="15" lengthAdjust="spacingAndGlyphs" >OK</text>
<rect x="415" y="375" width="55" height="23" fill="#7f7f7f" />
<rect x="415" y="375" width="54" height="22" fill="#ffffff" />
<rect x="416" y="376" width="53" height="21" fill="#d9d9d9" />
<text x="426.3" y="390" font-family="Liberation Sans" font-size="11" fill="#000" textLength="32.2" lengthAdjust="spacingAndGlyphs" >Cancel</text>
<rect x="476" y="375" width="46" height="23" fill="#7f7f7f" />
<rect x="476" y="375" width="45" height="22" fill="#ffffff" />
<rect x="477" y="376" width="44" height="21" fill="#d9d9d9" />
<text x="487.1" y="390" font-family="Liberation Sans" font-size="11" fill="#000" textLength="24.2" lengthAdjust="spacingAndGlyphs" >Load</text>
<rect x="528" y="375" width="39" height="23" fill="#7f7f7f" />
<rect x="528" y="375" width="38" height="22" fill="#ffffff" />
<rect x="529" y="376" width="37" height="21" fill="#d9d9d9" />
<text x="538.8" y="390" font-family="Liberation Sans" font-size="11" fill="#000" textLength="16.4" lengthAdjust="spacingAndGlyphs" >Del</text>
<rect x="574" y="375" width="58" height="23" fill="#7f7f7f" />
<rect x="574" y="375" width="57" height="22" fill="#ffffff" />
<rect x="575" y="376" width="56" height="21" fill="#d9d9d9" />
<text x="585.2" y="390" font-family="Liberation Sans" font-size="11" fill="#000" textLength="36" lengthAdjust="spacingAndGlyphs" >Browse</text>
<rect x="140" y="403" width="11" height="11" fill="#ffffff" />
<rect x="140" y="403" width="10" height="10" fill="#7f7f7f" />
<rect x="141" y="404" width="9" height="9" fill="#ffffff" />
<text x="153.5" y="412" font-family="Liberation Sans" font-size="11" fill="#000" textLength="103.2" lengthAdjust="spacingAndGlyphs" >No change properties</text>
<rect x="266" y="403" width="11" height="11" fill="#ffffff" />
<rect x="266" y="403" width="10" height="10" fill="#7f7f7f" />
<rect x="267" y="404" width="9" height="9" fill="#ffffff" />
<path d="M268.3,407.3 L270.6,410.6 L274.6,405.4" fill="none" stroke="#000" stroke-width="2.7" shape-rendering="geometricPrecision" stroke-linejoin="miter"/>
<text x="279.3" y="412" font-family="Liberation Sans" font-size="11" fill="#000" textLength="128.6" lengthAdjust="spacingAndGlyphs" >Preserve unchanged props</text>
<rect x="417" y="403" width="11" height="11" fill="#ffffff" />
<rect x="417" y="403" width="10" height="10" fill="#7f7f7f" />
<rect x="418" y="404" width="9" height="9" fill="#ffffff" />
<text x="430.3" y="412" font-family="Liberation Sans" font-size="11" fill="#000" textLength="44.2" lengthAdjust="spacingAndGlyphs" >Copy cell</text>
<text x="489.5" y="412" font-family="Liberation Sans" font-size="11" fill="#000" textLength="43" lengthAdjust="spacingAndGlyphs" >Edit Attr:</text>
<rect x="535" y="400" width="101" height="17" fill="#ffffff" />
<rect x="535" y="400" width="100" height="16" fill="#7f7f7f" />
<rect x="536" y="401" width="99" height="15" fill="#ffffff" />
<text x="537" y="412" font-family="Liberation Sans" font-size="11" fill="#000" textLength="25.5" lengthAdjust="spacingAndGlyphs" >value</text>
<rect x="622" y="401" width="13" height="15" fill="#7f7f7f" />
<rect x="622" y="401" width="12" height="14" fill="#ffffff" />
<rect x="623" y="402" width="11" height="13" fill="#d9d9d9" />
<path d="M624.5,409 L632.5,409 L628.5,413 Z" fill="#000" stroke="none" stroke-width="1" shape-rendering="geometricPrecision"/>
<rect x="134" y="418" width="489" height="162" fill="#8a8a8a" />
<rect x="135" y="419" width="488" height="161" fill="#e6e6e6" />
<rect x="135" y="419" width="486" height="159" fill="#ffffff" />
<rect x="137" y="473" width="186" height="13" fill="#c3c3c3" />
<text x="137" y="431" font-family="Liberation Mono" font-size="10" fill="#000" textLength="306" lengthAdjust="spacingAndGlyphs" style="white-space:pre">** models are generally not free: you must download</text>
<text x="137" y="444" font-family="Liberation Mono" font-size="10" fill="#000" textLength="378" lengthAdjust="spacingAndGlyphs" style="white-space:pre">** SPICE models for active devices and put them  into the below</text>
<text x="137" y="457" font-family="Liberation Mono" font-size="10" fill="#000" textLength="306" lengthAdjust="spacingAndGlyphs" style="white-space:pre">** referenced file in netlist/simulation directory.</text>
<text x="137" y="470" font-family="Liberation Mono" font-size="10" fill="#000" textLength="48" lengthAdjust="spacingAndGlyphs" style="white-space:pre">.temp 30</text>
<text x="137" y="483" font-family="Liberation Mono" font-size="10" fill="#000" textLength="186" lengthAdjust="spacingAndGlyphs" style="white-space:pre">.include &quot;model_test_ne555.txt&quot;</text>
<text x="137" y="509" font-family="Liberation Mono" font-size="10" fill="#000" textLength="48" lengthAdjust="spacingAndGlyphs" style="white-space:pre">.control</text>
<text x="137" y="522" font-family="Liberation Mono" font-size="10" fill="#000" textLength="60" lengthAdjust="spacingAndGlyphs" style="white-space:pre">  save all</text>
<text x="137" y="535" font-family="Liberation Mono" font-size="10" fill="#000" textLength="108" lengthAdjust="spacingAndGlyphs" style="white-space:pre">  tran 0.1u 1m uic</text>
<text x="137" y="548" font-family="Liberation Mono" font-size="10" fill="#000" textLength="132" lengthAdjust="spacingAndGlyphs" style="white-space:pre">  write test_ne555.raw</text>
<text x="137" y="561" font-family="Liberation Mono" font-size="10" fill="#000" textLength="30" lengthAdjust="spacingAndGlyphs" style="white-space:pre">.endc</text>
<rect x="623" y="418" width="13" height="175" fill="#777777" />
<rect x="624" y="419" width="12" height="174" fill="#ffffff" />
<rect x="624" y="419" width="11" height="173" fill="#b3b3b3" />
<path d="M624.4,429.5 L628.8,419.6 L634.3,429.5 Z" fill="#d9d9d9" stroke="none" stroke-width="1" shape-rendering="geometricPrecision"/>
<line x1="624.6" y1="429.3" x2="628.8" y2="419.8" stroke="#ffffff" stroke-width="1" shape-rendering="geometricPrecision"/>
<line x1="628.8" y1="419.8" x2="634.2" y2="429.3" stroke="#888888" stroke-width="1" shape-rendering="geometricPrecision"/>
<rect x="625" y="429" width="10" height="1" fill="#888888" />
<rect x="624" y="474" width="11" height="106" fill="#7f7f7f" />
<rect x="624" y="474" width="10" height="105" fill="#ffffff" />
<rect x="625" y="475" width="9" height="104" fill="#d9d9d9" />
<path d="M624.5,581.5 L634.5,581.5 L629.5,591.5 Z" fill="#d9d9d9" stroke="none" stroke-width="1" shape-rendering="geometricPrecision"/>
<line x1="624.7" y1="581.8" x2="629.5" y2="591.3" stroke="#ffffff" stroke-width="1" shape-rendering="geometricPrecision"/>
<line x1="629.5" y1="591.3" x2="634.3" y2="581.8" stroke="#777777" stroke-width="1" shape-rendering="geometricPrecision"/>
<rect x="134" y="580" width="489" height="13" fill="#777777" />
<rect x="135" y="581" width="488" height="12" fill="#ffffff" />
<rect x="135" y="581" width="487" height="11" fill="#b3b3b3" />
<path d="M135.5,586.5 L146,581.5 L146,591.5 Z" fill="#d9d9d9" stroke="none" stroke-width="1" shape-rendering="geometricPrecision"/>
<line x1="135.8" y1="586.5" x2="145.8" y2="581.7" stroke="#ffffff" stroke-width="1" shape-rendering="geometricPrecision"/>
<line x1="135.8" y1="586.5" x2="145.8" y2="591.3" stroke="#777777" stroke-width="1" shape-rendering="geometricPrecision"/>
<rect x="147" y="581" width="463" height="11" fill="#7f7f7f" />
<rect x="147" y="581" width="462" height="10" fill="#ffffff" />
<rect x="148" y="582" width="461" height="9" fill="#d9d9d9" />
<path d="M621.5,586.5 L611.5,581.5 L611.5,591.5 Z" fill="#d9d9d9" stroke="none" stroke-width="1" shape-rendering="geometricPrecision"/>
<line x1="611.7" y1="581.7" x2="621.3" y2="586.5" stroke="#ffffff" stroke-width="1" shape-rendering="geometricPrecision"/>
<line x1="611.7" y1="591.3" x2="621.3" y2="586.5" stroke="#777777" stroke-width="1" shape-rendering="geometricPrecision"/>
<rect x="134" y="592" width="502" height="1" fill="#ffffff" />
</svg></body></html>
